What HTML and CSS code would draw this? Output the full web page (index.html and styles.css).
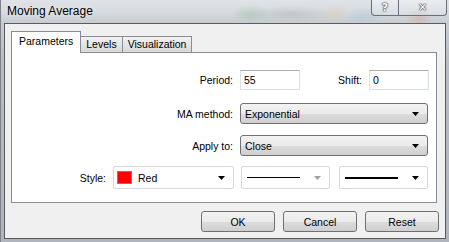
FILE: index.html
```html
<!DOCTYPE html>
<html lang="en">
<head>
  <meta charset="UTF-8" />
  <title>Moving Average</title>
  <link rel="stylesheet" href="styles.css">
</head>
<body>
  <div class="window">
    <div class="titlebar">
      <span class="title">Moving Average</span>
      <div class="caption">
        <span class="cap-btn cap-help">?</span>
        <span class="cap-btn cap-close">&#x2715;</span>
      </div>
    </div>

    <div class="client">
      <div class="tabs">
        <span class="tab active">Parameters</span>
        <span class="tab">Levels</span>
        <span class="tab">Visualization</span>
      </div>

      <div class="panel">
        <div class="row row-period">
          <span class="lbl lbl-main">Period:</span>
          <span class="edit edit-short">55</span>
          <span class="lbl lbl-shift">Shift:</span>
          <span class="edit edit-short">0</span>
        </div>

        <div class="row row-combo">
          <span class="lbl lbl-main">MA method:</span>
          <span class="combo combo-wide">
            <span class="combo-text">Exponential</span>
            <svg class="arrow" width="7" height="4" viewBox="0 0 7 4"><polygon points="0,0 7,0 3.5,4" fill="#000"/></svg>
          </span>
        </div>

        <div class="row row-combo">
          <span class="lbl lbl-main">Apply to:</span>
          <span class="combo combo-wide">
            <span class="combo-text">Close</span>
            <svg class="arrow" width="7" height="4" viewBox="0 0 7 4"><polygon points="0,0 7,0 3.5,4" fill="#000"/></svg>
          </span>
        </div>

        <div class="row row-style">
          <span class="lbl lbl-style">Style:</span>
          <span class="pick pick-color">
            <span class="swatch"></span>
            <span class="pick-text">Red</span>
            <svg class="arrow" width="7" height="4" viewBox="0 0 7 4"><polygon points="0,0 7,0 3.5,4" fill="#000"/></svg>
          </span>
          <span class="pick pick-line">
            <span class="line line-thin"></span>
            <svg class="arrow" width="7" height="4" viewBox="0 0 7 4"><polygon points="0,0 7,0 3.5,4" fill="#a0a0a0"/></svg>
          </span>
          <span class="pick pick-line pick-last">
            <span class="line line-thick"></span>
            <svg class="arrow" width="7" height="4" viewBox="0 0 7 4"><polygon points="0,0 7,0 3.5,4" fill="#000"/></svg>
          </span>
        </div>
      </div>

      <div class="buttons">
        <button class="btn">OK</button>
        <button class="btn">Cancel</button>
        <button class="btn">Reset</button>
      </div>
    </div>
  </div>
</body>
</html>
```

FILE: styles.css
```css
body {
  margin: 0;
  width: 449px;
  height: 242px;
  overflow: hidden;
  font-family: "Liberation Sans", Arial, sans-serif;
  font-size: 10.5px;
  color: #000;
}

.window {
  width: 449px;
  height: 242px;
  box-sizing: border-box;
  display: flex;
  flex-direction: column;
  border-left: 1px solid #7d8288;
  background:
    radial-gradient(ellipse 20px 9px at 250px 14px, rgba(110, 170, 110, 0.25), transparent),
    radial-gradient(ellipse 40px 8px at 290px 14px, rgba(150, 150, 150, 0.25), transparent),
    radial-gradient(ellipse 16px 9px at 333px 14px, rgba(230, 200, 140, 0.3), transparent),
    radial-gradient(ellipse 18px 9px at 362px 16px, rgba(150, 190, 220, 0.3), transparent),
    radial-gradient(ellipse 14px 9px at 418px 18px, rgba(220, 140, 120, 0.3), transparent),
    linear-gradient(to bottom, #dfe3e7 0, #d5dadf 12px, #c8cdd2 22px, #b9bec4 60px, #b0b5bb 100%);
}

.titlebar {
  height: 23px;
  display: flex;
  align-items: flex-start;
  flex-shrink: 0;
}

.title {
  font-size: 12px;
  margin: 4px 0 0 6px;
  color: #000;
  text-shadow: 0 0 6px rgba(255, 255, 255, 0.9);
}

.caption {
  margin-left: auto;
  margin-right: 2px;
  display: flex;
  border: 1px solid #6a7079;
  border-top: none;
  border-radius: 0 0 4px 4px;
  overflow: hidden;
  background: linear-gradient(to bottom, rgba(255, 255, 255, 0.35), rgba(255, 255, 255, 0.15));
}

.cap-btn {
  height: 15px;
  display: flex;
  align-items: center;
  justify-content: center;
  color: #fff;
  font-weight: bold;
  font-family: "DejaVu Sans", sans-serif;
  text-shadow: 0 0 1px #3a3f46, 0 0 1px #3a3f46, 0 0 2px #3a3f46;
}

.cap-help {
  width: 26px;
  font-size: 11px;
  border-right: 1px solid #6a7079;
}

.cap-close {
  width: 47px;
  font-size: 11px;
}

.client {
  flex: 1;
  margin: 0 3px 3px 3px;
  border: 1px solid #575c63;
  background: #f0f0f0;
  display: flex;
  flex-direction: column;
}

.tabs {
  display: flex;
  align-items: flex-end;
  height: 20px;
  margin: 8px 0 0 6px;
}

.tab {
  height: 15px;
  line-height: 15px;
  padding: 0 5px;
  border: 1px solid #898c95;
  border-bottom: none;
  margin-left: -1px;
  background: linear-gradient(to bottom, #f2f2f2, #e5e5e5 50%, #d9d9d9);
}

.tab.active {
  position: relative;
  z-index: 1;
  height: 21px;
  line-height: 19px;
  padding: 0 7px;
  margin-left: 0;
  margin-bottom: -1px;
  background: #fff;
}

.panel {
  margin-left: 6px;
  width: 426px;
  height: 151px;
  box-sizing: border-box;
  border: 1px solid #898c95;
  background: #fff;
  padding-top: 17px;
  display: flex;
  flex-direction: column;
}

.row {
  display: flex;
  align-items: center;
}

.row-period {
  height: 20px;
}

.row-combo {
  height: 21px;
  margin-top: 13px;
}

.row-combo + .row-combo {
  margin-top: 11px;
}

.row-style {
  height: 23px;
  margin-top: 10px;
}

.lbl {
  text-align: right;
  flex-shrink: 0;
}

.lbl-main {
  width: 221px;
  margin-right: 7px;
}

.lbl-shift {
  width: 62px;
  margin-right: 7px;
}

.lbl-style {
  width: 94px;
  margin-right: 7px;
}

.edit {
  height: 20px;
  box-sizing: border-box;
  width: 60px;
  border: 1px solid #dbdfe6;
  border-top-color: #abadb3;
  background: #fff;
  padding-left: 3px;
  display: flex;
  align-items: center;
}

.combo {
  height: 21px;
  box-sizing: border-box;
  border: 1px solid #707070;
  border-radius: 3px;
  background: linear-gradient(to bottom, #f2f2f2, #ebebeb 50%, #dddddd 51%, #cfcfcf);
  display: flex;
  align-items: center;
  padding-left: 4px;
}

.combo-wide {
  width: 188px;
}

.combo-text,
.pick-text {
  flex: 1;
}

.arrow {
  margin-right: 8px;
  flex-shrink: 0;
}

.pick {
  height: 23px;
  box-sizing: border-box;
  border: 1px solid #d5d9df;
  border-radius: 2px;
  background: #fff;
  display: flex;
  align-items: center;
}

.pick-color {
  width: 121px;
  margin-right: 7px;
  padding-left: 3px;
}

.swatch {
  width: 13px;
  height: 11px;
  background: #ff0000;
  border: 1px solid #808080;
  margin-right: 6px;
}

.pick-line {
  width: 89px;
  padding-left: 5px;
  margin-right: 9px;
}

.line {
  flex: 1;
  margin-right: 14px;
  background: #000;
}

.line-thin {
  height: 1px;
}

.line-thick {
  height: 2px;
}

.pick-last {
  margin-right: 0;
}

.buttons {
  display: flex;
  justify-content: flex-end;
  gap: 8px;
  margin: 8px 6px 0 0;
}

.btn {
  width: 74px;
  height: 21px;
  border: 1px solid #707070;
  border-radius: 3px;
  background: linear-gradient(to bottom, #f2f2f2, #ebebeb 50%, #dddddd 51%, #cfcfcf);
  font-family: "Liberation Sans", Arial, sans-serif;
  font-size: 10.5px;
  color: #000;
  padding: 0;
}
```
